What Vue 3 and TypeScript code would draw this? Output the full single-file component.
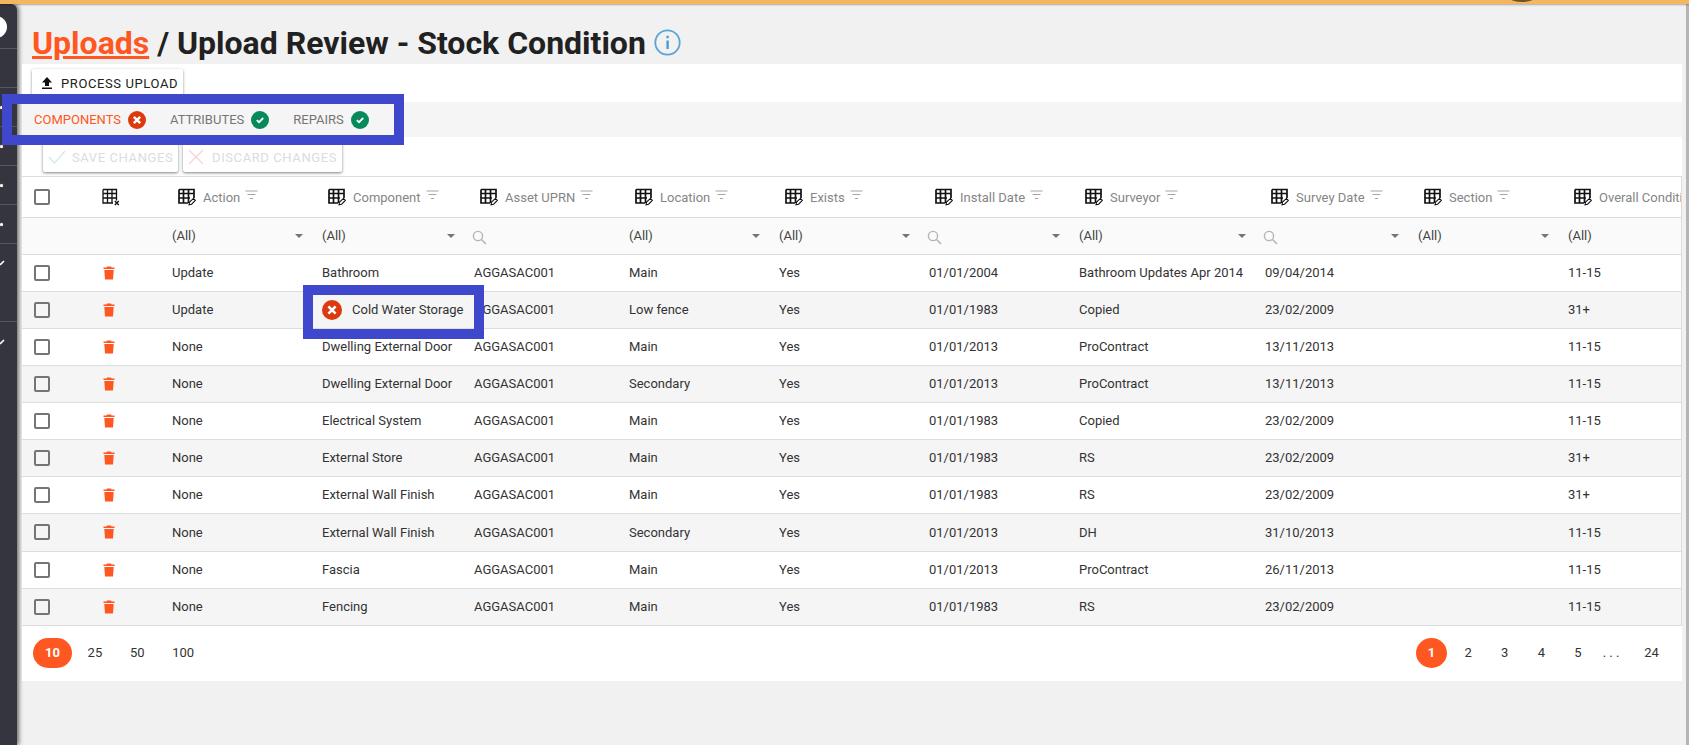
<script setup lang="ts">
interface Row {
  action: string
  component: string
  location: string
  install: string
  surveyor: string
  survey: string
  condition: string
  error?: boolean
}

const columns = ['Action', 'Component', 'Asset UPRN', 'Location', 'Exists', 'Install Date', 'Surveyor', 'Survey Date', 'Section', 'Overall Condition']
const filters = ['all', 'all', 'search', 'all', 'all', 'searchcaret', 'all', 'searchcaret', 'all', 'all']
const widths = [54, 84, 150, 152, 155, 150, 150, 150, 186, 153, 150, 160]

const rows: Row[] = [
  { action: 'Update', component: 'Bathroom', location: 'Main', install: '01/01/2004', surveyor: 'Bathroom Updates Apr 2014', survey: '09/04/2014', condition: '11-15' },
  { action: 'Update', component: 'Cold Water Storage', location: 'Low fence', install: '01/01/1983', surveyor: 'Copied', survey: '23/02/2009', condition: '31+', error: true },
  { action: 'None', component: 'Dwelling External Door', location: 'Main', install: '01/01/2013', surveyor: 'ProContract', survey: '13/11/2013', condition: '11-15' },
  { action: 'None', component: 'Dwelling External Door', location: 'Secondary', install: '01/01/2013', surveyor: 'ProContract', survey: '13/11/2013', condition: '11-15' },
  { action: 'None', component: 'Electrical System', location: 'Main', install: '01/01/1983', surveyor: 'Copied', survey: '23/02/2009', condition: '11-15' },
  { action: 'None', component: 'External Store', location: 'Main', install: '01/01/1983', surveyor: 'RS', survey: '23/02/2009', condition: '31+' },
  { action: 'None', component: 'External Wall Finish', location: 'Main', install: '01/01/1983', surveyor: 'RS', survey: '23/02/2009', condition: '31+' },
  { action: 'None', component: 'External Wall Finish', location: 'Secondary', install: '01/01/2013', surveyor: 'DH', survey: '31/10/2013', condition: '11-15' },
  { action: 'None', component: 'Fascia', location: 'Main', install: '01/01/2013', surveyor: 'ProContract', survey: '26/11/2013', condition: '11-15' },
  { action: 'None', component: 'Fencing', location: 'Main', install: '01/01/1983', surveyor: 'RS', survey: '23/02/2009', condition: '11-15' },
]

const sideItems = ['dot', 'dot', 'dot', 'dot', 'check', 'check']
const sizes = ['25', '50', '100']
const pages = ['2', '3', '4', '5']
</script>

<template>
  <div class="page">
    <div class="topbar"><span class="bump"></span></div>
    <div class="body">
      <aside class="side">
        <div class="side-top"><span class="avatar"></span></div>
        <div class="side-item"></div>
        <div v-for="(s, i) in sideItems" :key="i" class="side-item" :class="{ tall: i === 4, end: i === 5 }">
          <span v-if="s === 'dot'" class="dot"></span>
          <svg v-else class="tick" width="6" height="6" viewBox="0 0 6 6"><path d="M0 5 L4 1" stroke="#fff" stroke-width="1.6" fill="none" /></svg>
        </div>
      </aside>

      <main class="main">
        <h1 class="title">
          <a class="crumb">Uploads</a>
          <span> / Upload Review - Stock Condition</span>
          <svg class="info" width="27" height="27" viewBox="0 0 27 27">
            <circle cx="13.5" cy="13.5" r="12.2" fill="none" stroke="#5aa5d8" stroke-width="1.8" />
            <rect x="12.4" y="11.5" width="2.4" height="8.5" fill="#4a9bd4" />
            <rect x="12.4" y="6.8" width="2.4" height="2.4" fill="#4a9bd4" />
          </svg>
        </h1>

        <div class="toolbar">
          <button class="btn process">
            <svg width="14" height="14" viewBox="0 0 14 14"><path d="M7 1 L12 6.5 H9 V10 H5 V6.5 H2 Z M2 11.5 H12 V13 H2 Z" fill="#111" /></svg>
            PROCESS UPLOAD
          </button>
        </div>

        <div class="tabs">
          <span class="tab active">COMPONENTS</span>
          <svg class="badge" width="18" height="18" viewBox="0 0 18 18"><circle cx="9" cy="9" r="9" fill="#dc3a0e" /><path d="M5.8 5.8 L12.2 12.2 M12.2 5.8 L5.8 12.2" stroke="#fff" stroke-width="2.4" /></svg>
          <span class="tab next">ATTRIBUTES</span>
          <svg class="badge" width="18" height="18" viewBox="0 0 18 18"><circle cx="9" cy="9" r="9" fill="#068a5b" /><path d="M5.8 9.2 L8 11.2 L12.2 7" stroke="#fff" stroke-width="1.8" fill="none" /></svg>
          <span class="tab next">REPAIRS</span>
          <svg class="badge" width="18" height="18" viewBox="0 0 18 18"><circle cx="9" cy="9" r="9" fill="#068a5b" /><path d="M5.8 9.2 L8 11.2 L12.2 7" stroke="#fff" stroke-width="1.8" fill="none" /></svg>
        </div>

        <div class="actions">
          <button class="btn ghost">
            <svg width="18" height="16" viewBox="0 0 18 16"><path d="M1 8 L6.5 14 L17 2" stroke="#cfeee0" stroke-width="1.3" fill="none" /></svg>
            SAVE CHANGES
          </button>
          <button class="btn ghost">
            <svg width="16" height="16" viewBox="0 0 16 16"><path d="M1 1 L15 15 M15 1 L1 15" stroke="#f9d2d2" stroke-width="1.3" fill="none" /></svg>
            DISCARD CHANGES
          </button>
        </div>

        <div class="grid-wrap">
          <table class="grid">
            <colgroup>
              <col v-for="(w, i) in widths" :key="i" :style="{ width: w + 'px' }" />
            </colgroup>
            <thead>
              <tr class="head">
                <th class="c-check"><span class="box"></span></th>
                <th class="c-del">
                  <svg class="gridicon" width="18" height="18" viewBox="0 0 18 18">
                    <path d="M1 1.5 H14.5 V12.5 M1 1.5 V15 H11 M1 5.5 H14.5 M1 10 H14.5 M5.5 1.5 V15 M10 1.5 V15" fill="none" stroke="#111" stroke-width="1.3" />
                    <path d="M12.8 13 L16.8 17 M16.8 13 L12.8 17" stroke="#111" stroke-width="1.4" />
                  </svg>
                </th>
                <th v-for="c in columns" :key="c" class="c-col">
                  <span class="headcell">
                    <svg class="gridicon" width="18" height="18" viewBox="0 0 18 18">
                      <path d="M1 1.5 H16 V10 M1 1.5 V15 H10 M1 5.5 H16 M1 10 H12 M5.5 1.5 V15 M10.5 1.5 V15" fill="none" stroke="#111" stroke-width="1.7" />
                      <path d="M11 16.8 L11.6 14 L15.4 10.4 L17.4 12.4 L13.6 16.2 Z" fill="#fff" stroke="#111" stroke-width="1.1" />
                    </svg>
                    <span class="hname">{{ c }}</span>
                    <svg class="funnel" width="13" height="10" viewBox="0 0 13 10"><path d="M0.5 1 H12.5 M2.5 4.5 H10.5 M5 8.5 H8" stroke="#a5a5a5" stroke-width="1" fill="none" /></svg>
                  </span>
                </th>
              </tr>
              <tr class="filter">
                <td></td>
                <td></td>
                <td v-for="(f, i) in filters" :key="i">
                  <div class="fcell">
                    <span v-if="f === 'all'" class="falls">(All)</span>
                    <svg v-else class="lens" width="15" height="15" viewBox="0 0 15 15"><circle cx="6" cy="6" r="4.6" fill="none" stroke="#b5b5b5" stroke-width="1.4" /><path d="M9.5 9.5 L14 14" stroke="#b5b5b5" stroke-width="1.6" /></svg>
                    <span v-if="f !== 'search'" class="caret"></span>
                  </div>
                </td>
              </tr>
            </thead>
            <tbody>
              <tr v-for="(r, i) in rows" :key="i" class="row" :class="{ alt: i % 2 === 1 }">
                <td class="c-check"><span class="box"></span></td>
                <td class="c-del">
                  <svg class="trash" width="12" height="14" viewBox="0 0 12 14"><path d="M4 0.5 H8 L8.6 1.6 H11.5 V3 H0.5 V1.6 H3.4 Z M1.3 4 H10.7 L10 13.5 H2 Z" fill="#ff5722" /></svg>
                </td>
                <td>{{ r.action }}</td>
                <td :class="{ 'err-cell': r.error }">
                  <span v-if="r.error" class="err-wrap">
                    <svg class="err" width="20" height="20" viewBox="0 0 20 20"><circle cx="10" cy="10" r="10" fill="#dc3a0e" /><path d="M6.4 6.4 L13.6 13.6 M13.6 6.4 L6.4 13.6" stroke="#fff" stroke-width="2.6" /></svg>
                    <span>{{ r.component }}</span>
                    <span class="marker"></span>
                  </span>
                  <template v-else>{{ r.component }}</template>
                </td>
                <td>AGGASAC001</td>
                <td>{{ r.location }}</td>
                <td>Yes</td>
                <td>{{ r.install }}</td>
                <td>{{ r.surveyor }}</td>
                <td>{{ r.survey }}</td>
                <td></td>
                <td>{{ r.condition }}</td>
              </tr>
            </tbody>
          </table>
        </div>

        <div class="pager">
          <div class="sizes">
            <span class="size current">10</span>
            <span v-for="s in sizes" :key="s" class="size">{{ s }}</span>
          </div>
          <div class="pages">
            <span class="pg current">1</span>
            <span v-for="p in pages" :key="p" class="pg">{{ p }}</span>
            <span class="pg dots">. . .</span>
            <span class="pg last">24</span>
          </div>
        </div>

        <span class="tab-marker"></span>
      </main>
      <div class="scrollbar"></div>
    </div>
  </div>
</template>

<style>
html, body { margin: 0; background: #f1f1f1; overflow: hidden; }
</style>

<style scoped>
.page { width: 1689px; height: 745px; display: flex; flex-direction: column; font-family: Roboto, "Liberation Sans", sans-serif; color: #333; overflow: hidden; }
.topbar { height: 4px; background: #f5b75e; box-shadow: 0 1px 2px rgba(0,0,0,.3); position: relative; z-index: 4; flex: none; overflow: hidden; }
.bump { position: absolute; left: 1510px; top: -6px; width: 24px; height: 8px; border-radius: 50%; background: #6b5330; }
.body { flex: 1; display: flex; min-height: 0; }
.side { width: 17px; flex: none; background: #35353f; border-top-right-radius: 6px; box-shadow: 2px 0 4px rgba(0,0,0,.55); display: flex; flex-direction: column; position: relative; z-index: 2; }
.side-top { height: 45px; border-bottom: 1px solid #56565f; position: relative; box-sizing: border-box; overflow: hidden; }
.avatar { position: absolute; left: -15px; top: 12px; width: 22px; height: 22px; border-radius: 50%; background: #fff; }
.side-item { height: 39px; box-sizing: border-box; border-bottom: 1px solid #56565f; display: flex; align-items: center; }
.side-item.tall { height: 78px; align-items: flex-start; padding-top: 16px; }
.side-item.end { border-bottom: 0; }
.dot { width: 3px; height: 3px; background: #fff; border-radius: 50%; box-shadow: 0 0 1px #f5b75e; }
.tick { display: block; }
.main { flex: 1; min-width: 0; padding-left: 5px; position: relative; z-index: 3; }
.title { margin: 0; height: 60px; box-sizing: border-box; padding: 17px 0 0 10px; font-size: 32px; line-height: 44px; font-weight: 700; color: #212121; white-space: nowrap; display: flex; align-items: center; }
.title span { white-space: pre; }
.crumb { color: #ff5722; text-decoration: underline; }
.info { margin-left: 8px; }
.toolbar { width: 1660px; height: 38px; background: #fff; box-sizing: border-box; padding: 5px 0 0 10px; overflow: hidden; }
.btn { border: 0; background: #fff; border-radius: 2px; font-family: inherit; font-size: 13px; font-weight: 400; letter-spacing: .6px; display: flex; align-items: center; box-shadow: 0 1px 3px rgba(0,0,0,.45); padding: 0; }
.process { width: 151px; height: 28px; color: #212121; padding-left: 8px; gap: 7px; }
.tabs { width: 1660px; height: 35px; background: #f5f5f5; display: flex; align-items: center; padding-left: 12px; box-sizing: border-box; position: relative; }
.tab { font-size: 13px; font-weight: 400; color: #757575; }
.tab.active { color: #ff5722; }
.tab.next { margin-left: 24px; }
.badge { margin-left: 7px; }
.actions { width: 1660px; height: 39px; background: #fff; box-sizing: border-box; padding: 4px 0 0 21px; display: flex; gap: 5px; }
.ghost { height: 30px; color: #dcdcdc; gap: 6px; padding-left: 5px; box-shadow: 0 1px 3px rgba(0,0,0,.5); margin-top: 1px; }
.ghost:first-child { width: 135px; }
.ghost:last-child { width: 159px; gap: 8px; }
.grid-wrap { width: 1660px; border-top: 1px solid #ddd; border-right: 1px solid #ddd; box-sizing: border-box; overflow: hidden; background: #fff; }
.grid { border-collapse: collapse; table-layout: fixed; width: 1694px; font-size: 13px; color: #333; }
.grid td, .grid th { padding: 0 0 0 12px; border-bottom: 1px solid #ddd; white-space: nowrap; overflow: hidden; text-align: left; box-sizing: border-box; font-weight: 400; }
.head { height: 40px; }
.filter { height: 37px; background: #fafafa; }
.row { height: 37px; background: #fff; }
.row:nth-child(8) { height: 38px; }
.row.alt { background: #f5f5f5; }
.grid .c-del { padding-left: 25px; }
.grid .c-col { padding-left: 18px; }
.box { display: block; width: 12px; height: 12px; border: 2px solid #757575; border-radius: 2px; }
.gridicon { display: block; }
.c-del .gridicon { margin-left: 1px; }
.headcell { display: flex; align-items: center; color: #858585; }
.hname { margin-left: 7px; margin-top: 2px; }
.funnel { margin-left: 5px; margin-top: -3px; }
.fcell { display: flex; align-items: center; position: relative; height: 36px; }
.falls { color: #444; }
.lens { margin-top: 4px; margin-left: -2px; }
.caret { position: absolute; right: 7px; top: 16px; border-left: 4px solid transparent; border-right: 4px solid transparent; border-top: 4px solid #757575; }
.trash { display: block; margin-left: 2px; }
.err-cell { overflow: visible !important; }
.err-wrap { display: flex; align-items: center; position: relative; height: 20px; }
.err { flex: none; margin-right: 10px; margin-left: 0; }
.marker { position: absolute; left: -19px; top: -15px; width: 161px; height: 34px; border: 10px solid #3f48cc; pointer-events: none; }
.tab-marker { position: absolute; left: -15px; top: 90px; width: 382px; height: 31px; border: 10px solid #3f48cc; pointer-events: none; }
.pager { width: 1660px; height: 55px; background: #fff; box-sizing: border-box; display: flex; justify-content: space-between; align-items: center; padding: 0 0 0 11px; font-size: 13px; color: #333; }
.sizes { display: flex; align-items: center; }
.size { padding: 0 12px; height: 30px; line-height: 30px; text-align: center; margin-right: 3.7px; border-radius: 15px; }
.size.current, .pg.current { background: #ff5722; color: #fff; font-weight: 700; }
.pages { display: flex; align-items: center; padding-right: 15px; }
.pg { width: 31px; height: 30px; line-height: 30px; text-align: center; margin-right: 5.6px; border-radius: 50%; }
.pg.dots { width: 24px; margin-right: 13px; }
.pg.last { margin-right: 0; }
.scrollbar { width: 3px; flex: none; background: #b5b5b5; margin-left: auto; }
</style>
